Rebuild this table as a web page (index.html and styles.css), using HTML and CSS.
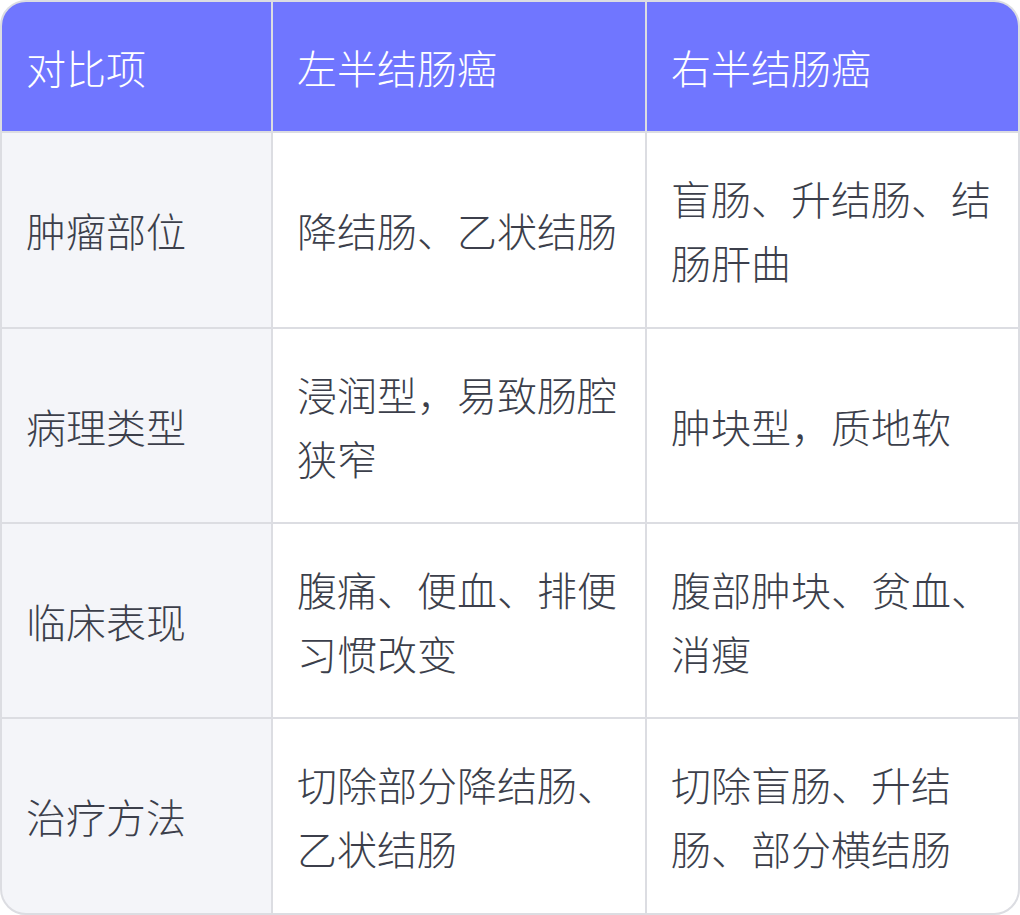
FILE: index.html
```html
<!DOCTYPE html>
<html lang="zh">
<head>
<meta charset="utf-8">
<link rel="stylesheet" href="styles.css">
</head>
<body>
<div class="table">
  <div class="cell head">对比项</div>
  <div class="cell head">左半结肠癌</div>
  <div class="cell head">右半结肠癌</div>

  <div class="cell label">肿瘤部位</div>
  <div class="cell">降结肠、乙状结肠</div>
  <div class="cell">盲肠、升结肠、结肠肝曲</div>

  <div class="cell label">病理类型</div>
  <div class="cell">浸润型，易致肠腔狭窄</div>
  <div class="cell">肿块型，质地软</div>

  <div class="cell label">临床表现</div>
  <div class="cell">腹痛、便血、排便习惯改变</div>
  <div class="cell">腹部肿块、贫血、消瘦</div>

  <div class="cell label">治疗方法</div>
  <div class="cell">切除部分降结肠、乙状结肠</div>
  <div class="cell">切除盲肠、升结肠、部分横结肠</div>
</div>
</body>
</html>
```

FILE: styles.css
```css
html, body {
  margin: 0;
  padding: 0;
  background: #ffffff;
}

.table {
  box-sizing: border-box;
  width: 1020px;
  height: 915px;
  border: 2px solid #dcdde2;
  border-radius: 26px;
  overflow: hidden;
  display: grid;
  grid-template-columns: 269px 372px 371px;
  grid-template-rows: 129px 194px 193px 193px 194px;
  gap: 2px;
  background: #dcdde2;
  font-family: "Noto Sans CJK SC", "Noto Sans", sans-serif;
  font-size: 40px;
  font-weight: 300;
  line-height: 64px;
  color: #3c3f4b;
}

.cell {
  background: #ffffff;
  padding: 0 25px 0 24px;
  display: flex;
  align-items: center;
}

.cell.head {
  background: #7076ff;
  color: #ffffff;
}

.cell.label {
  background: #f4f5f9;
}
```
